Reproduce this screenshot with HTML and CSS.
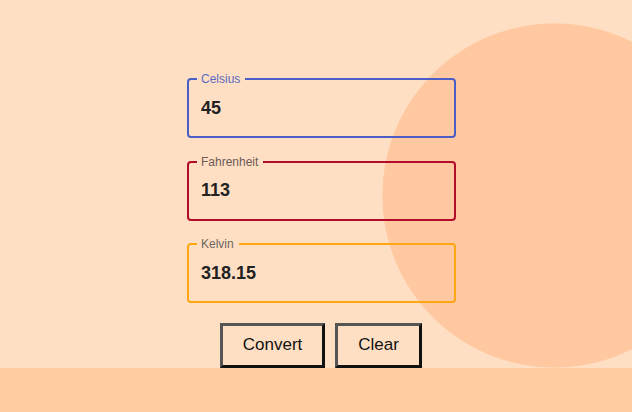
FILE: index.html
```html
<!DOCTYPE html>
<html lang="en">
<head>
<meta charset="utf-8">
<title>Temperature Converter</title>
<link rel="stylesheet" href="styles.css">
</head>
<body>
<main class="converter">
  <form class="form">
    <fieldset class="field field-c">
      <legend>Celsius</legend>
      <input type="text" value="45" autofocus>
    </fieldset>
    <fieldset class="field field-f">
      <legend>Fahrenheit</legend>
      <input type="text" value="113">
    </fieldset>
    <fieldset class="field field-k">
      <legend>Kelvin</legend>
      <input type="text" value="318.15">
    </fieldset>
    <div class="actions">
      <button type="button" class="btn btn-convert">Convert</button>
      <button type="button" class="btn btn-clear">Clear</button>
    </div>
  </form>
</main>
<footer class="ground"></footer>
</body>
</html>
```
FILE: styles.css
```css
* { box-sizing: border-box; }
html, body { margin: 0; padding: 0; }
body {
  width: 632px;
  height: 412px;
  overflow: hidden;
  background-color: #ffdfc4;
  background-image: radial-gradient(circle 172.5px at 554.5px 195.5px, #ffc8a0 99.5%, rgba(255, 200, 160, 0) 100%);
  background-repeat: no-repeat;
  font-family: "Liberation Sans", Arial, sans-serif;
}
.converter {
  height: 368px;
  padding-top: 72px;
  padding-left: 187px;
}
.form {
  width: 269px;
  display: flex;
  flex-direction: column;
  gap: 16.5px;
}
.field {
  margin: 0;
  padding: 0 8px;
  border: 2px solid;
  border-radius: 4px;
  min-width: 0;
}
.field legend {
  padding: 0 5px 0 4px;
  font-size: 12px;
  line-height: 14px;
}
.field-c { border-color: #4b5ec6; }
.field-c legend { color: #5b6bbf; }
.field-f { border-color: #b10d2a; }
.field-f legend { color: #6e5a55; }
.field-k { border-color: #ffa712; }
.field-k legend { color: #6e6660; }
.field input {
  display: block;
  width: 100%;
  height: 44px;
  margin: 0 0 6px 0;
  padding: 0 0 0 4px;
  border: none;
  outline: none;
  background: transparent;
  font-family: "Liberation Sans", Arial, sans-serif;
  font-weight: bold;
  font-size: 18px;
  color: #222;
}
.actions {
  display: flex;
  gap: 10px;
  padding-left: 33px;
  margin-top: 3px;
}
.btn {
  height: 45px;
  background: #ffdfc4;
  border: 3px solid;
  border-color: #555 #111 #111 #555;
  font-family: "Liberation Sans", Arial, sans-serif;
  font-size: 17px;
  color: #111;
  padding: 0;
}
.btn-convert { width: 105px; }
.btn-clear { width: 87px; }
.ground {
  height: 44px;
  background: #ffcca2;
}
```
